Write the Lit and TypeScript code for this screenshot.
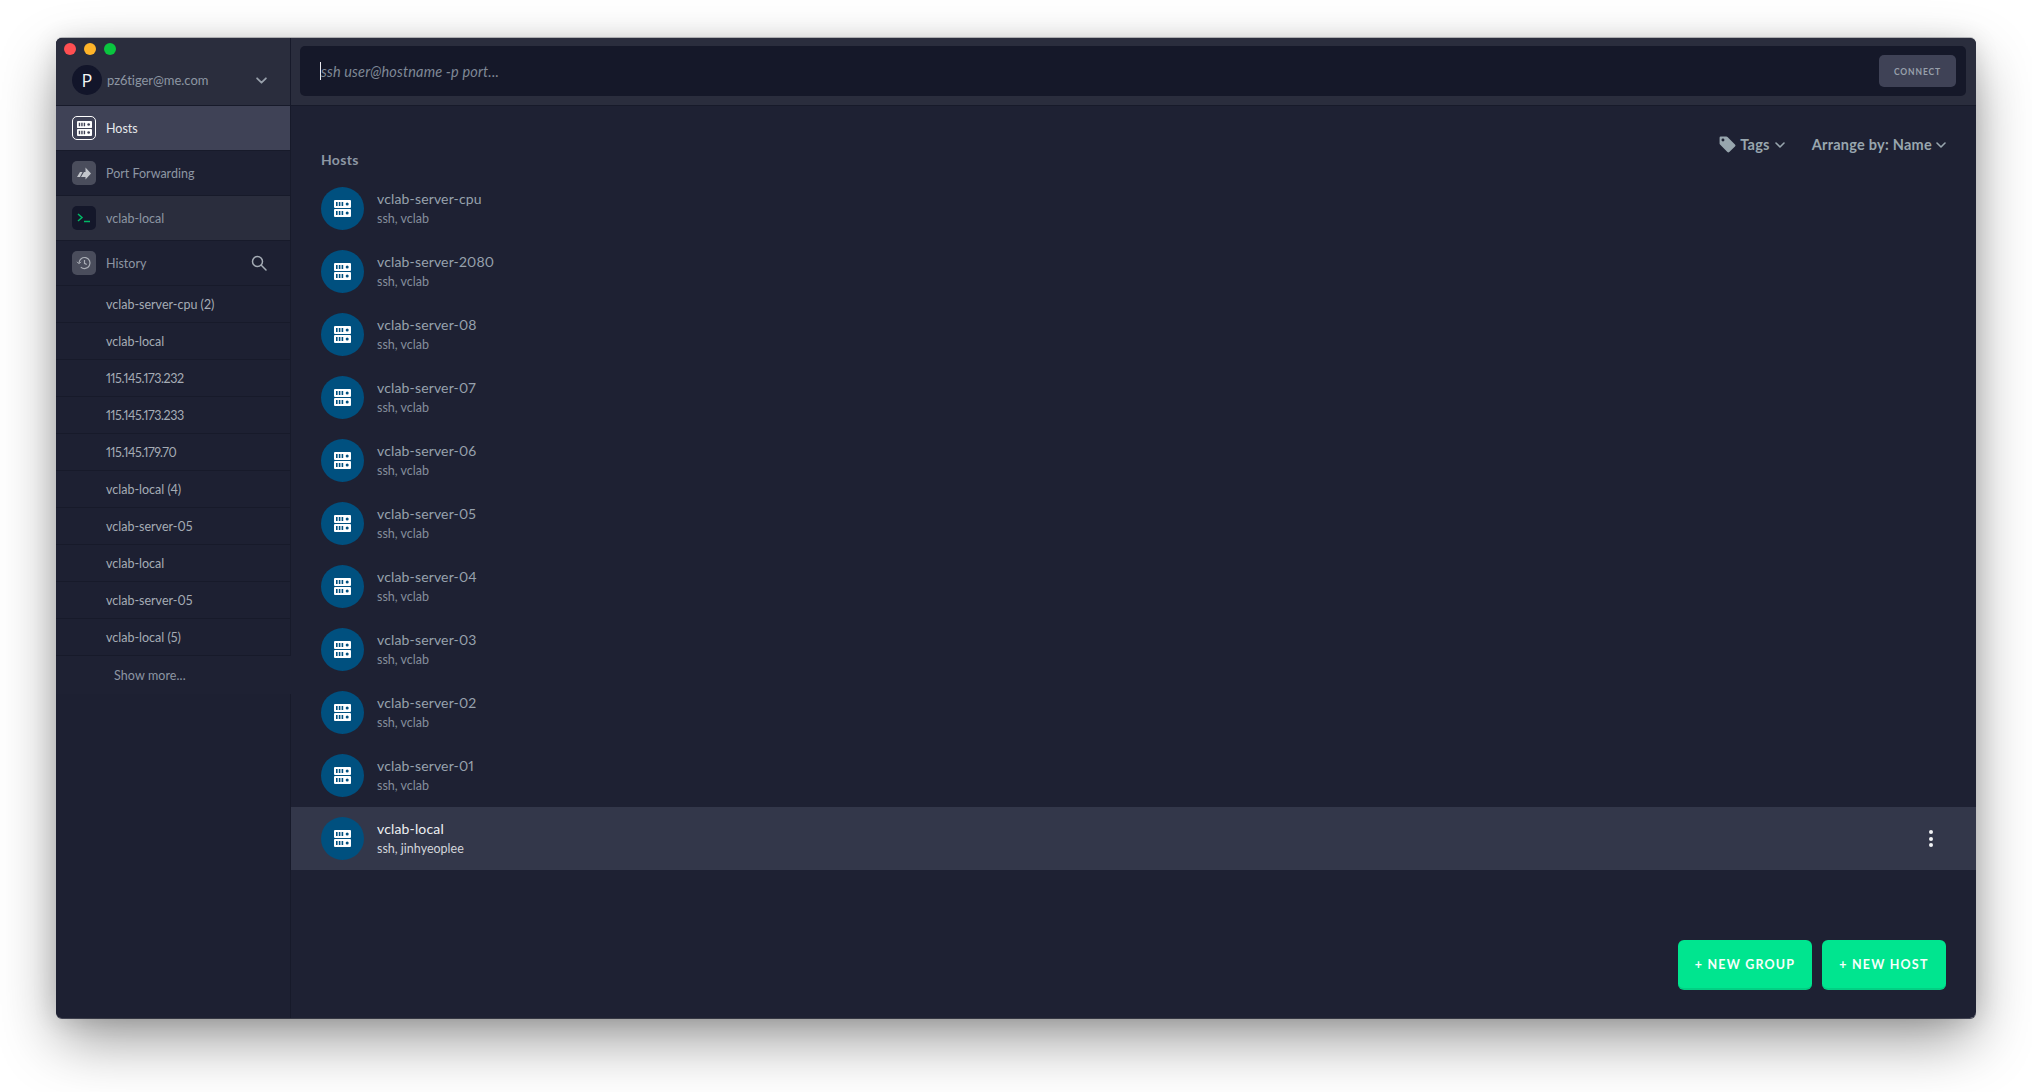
import { LitElement, html, css, svg } from "lit";
import { customElement } from "lit/decorators.js";

const serverIcon = (size: number, cls = "") => html`<svg class=${cls} width=${size} height=${size} viewBox="0 0 17 17">
  ${[0, 9].map(
    (y) => svg`<path fill="#fff" d="M1 ${y}h15a1 1 0 0 1 1 1v6a1 1 0 0 1-1 1H1a1 1 0 0 1-1-1v-6a1 1 0 0 1 1-1z"/>
    <path fill="var(--slot, #00507f)" d="M2 ${y + 2}h1.6v4H2zM4.8 ${y + 2}h1.6v4H4.8zM7.6 ${y + 2}h1.6v4H7.6z"/>
    <circle fill="var(--slot, #00507f)" cx="13.2" cy=${y + 4} r="1.5"/>`
  )}
</svg>`;

const chevron = (w: number, color: string, sw = 1.6) => html`<svg width=${w} height=${Math.round(w * 0.6)} viewBox="0 0 10 6" fill="none" stroke=${color} stroke-width=${sw} stroke-linecap="round" stroke-linejoin="round"><path d="M1 1l4 4 4-4"/></svg>`;

const hosts: [string, string][] = [
  ["vclab-server-cpu", "ssh, vclab"],
  ["vclab-server-2080", "ssh, vclab"],
  ["vclab-server-08", "ssh, vclab"],
  ["vclab-server-07", "ssh, vclab"],
  ["vclab-server-06", "ssh, vclab"],
  ["vclab-server-05", "ssh, vclab"],
  ["vclab-server-04", "ssh, vclab"],
  ["vclab-server-03", "ssh, vclab"],
  ["vclab-server-02", "ssh, vclab"],
  ["vclab-server-01", "ssh, vclab"],
  ["vclab-local", "ssh, jinhyeoplee"],
];

const history = [
  "vclab-server-cpu (2)",
  "vclab-local",
  "115.145.173.232",
  "115.145.173.233",
  "115.145.179.70",
  "vclab-local (4)",
  "vclab-server-05",
  "vclab-local",
  "vclab-server-05",
  "vclab-local (5)",
];

@customElement("app-root")
export class AppRoot extends LitElement {
  static styles = css`
    :host {
      display: block;
      width: 2032px;
      height: 1092px;
      box-sizing: border-box;
      padding: 38px 56px 74px;
      background: #fff;
      font-family: Lato, "Noto Sans", sans-serif;
      font-feature-settings: "pnum" 1;
      overflow: hidden;
    }
    .window {
      width: 1920px;
      height: 980px;
      display: flex;
      border-radius: 6px;
      overflow: hidden;
      background: #1e2133;
    }
    .shadow {
      border-radius: 6px;
      box-shadow: 0 24px 60px -4px rgba(0, 0, 0, 0.42), 0 2px 24px rgba(0, 0, 0, 0.12), 0 -1px 0 #c4c5c8, 0 1px 0 #55586a;
      width: 1920px;
      height: 980px;
    }
    .sidebar {
      width: 234px;
      flex: none;
      background: #1d2032;
      display: flex;
      flex-direction: column;
      border-right: 1px solid #171a2a;
    }
    .account {
      height: 67px;
      flex: none;
      background: #2a2d3d;
      border-bottom: 1px solid #171a2a;
      box-sizing: content-box;
      padding: 0 16px;
      display: flex;
      flex-direction: column;
    }
    .lights {
      display: flex;
      gap: 8px;
      margin: 5px 0 0 -8px;
    }
    .light {
      width: 12px;
      height: 12px;
      border-radius: 50%;
    }
    .red { background: #ff4f52; }
    .yellow { background: #ffb429; }
    .green { background: #0ac53f; }
    .user {
      display: flex;
      align-items: center;
      margin-top: 10px;
    }
    .avatar {
      width: 30px;
      height: 30px;
      border-radius: 50%;
      background: #12152a;
      color: #f4f5f6;
      font-size: 18px;
      display: flex;
      align-items: center;
      justify-content: center;
      margin-right: 5px;
      font-family: "Open Sans", sans-serif;
    }
    .email {
      flex: 1;
      font-size: 13px;
      color: #8d96a3;
      letter-spacing: -0.05px;
    }
    .user svg { margin-right: 7px; }
    .nav {
      height: 44px;
      flex: none;
      box-sizing: content-box;
      border-bottom: 1px solid #171a2a;
      display: flex;
      align-items: center;
      padding: 0 16px;
      font-size: 12.5px;
      color: #8d96a3;
    }
    .nav.active {
      background: #3f4256;
      color: #e6e8ea;
    }
    .nav.session { background: #2a2d3d; }
    .tile {
      width: 24px;
      height: 24px;
      border-radius: 5px;
      box-sizing: border-box;
      margin-right: 10px;
      display: flex;
      align-items: center;
      justify-content: center;
      background: #4a4d5c;
      flex: none;
    }
    .tile.outline {
      background: transparent;
      border: 1px solid #fff;
      --slot: #3f4256;
    }
    .tile.term { background: #14172a; }
    .nav .grow { flex: 1; }
    .nav .search { margin-right: 7px; }
    .hist {
      height: 36px;
      flex: none;
      box-sizing: content-box;
      border-bottom: 1px solid #171a2a;
      display: flex;
      align-items: center;
      padding-left: 50px;
      font-size: 12.5px;
      color: #a5acb5;
    }
    .hist.num { letter-spacing: -0.4px; }
    .more {
      height: 38px;
      flex: none;
      display: flex;
      align-items: center;
      padding-left: 58px;
      font-size: 12.5px;
      color: #8d96a3;
      letter-spacing: 0.1px;
      background: #1e2133;
      margin-right: -1px;
      position: relative;
    }
    .main {
      flex: 1;
      min-width: 0;
      display: flex;
      flex-direction: column;
    }
    .top {
      height: 67px;
      flex: none;
      box-sizing: content-box;
      background: #2a2d3d;
      border-bottom: 1px solid #171a2a;
      padding: 0 10px 0 9px;
      display: flex;
      align-items: flex-start;
    }
    .input {
      flex: 1;
      height: 50px;
      margin-top: 8px;
      box-sizing: border-box;
      background: #151829;
      border-radius: 5px;
      display: flex;
      align-items: center;
      padding: 0 10px 0 20px;
    }
    .caret {
      width: 1px;
      height: 18px;
      background: #e8e8ee;
      flex: none;
    }
    .placeholder {
      flex: 1;
      font-style: italic;
      font-size: 14.5px;
      color: #7f8896;
      letter-spacing: 0.15px;
      padding-top: 1px;
    }
    .connect {
      width: 77px;
      height: 32px;
      box-sizing: border-box;
      padding-top: 1px;
      background: #3f4256;
      border-radius: 5px;
      color: #98a0ab;
      font-size: 8.5px;
      font-weight: 700;
      letter-spacing: 0.9px;
      display: flex;
      align-items: center;
      justify-content: center;
    }
    .head {
      height: 71px;
      flex: none;
      display: flex;
      justify-content: space-between;
      padding: 0 30px 0 30px;
    }
    .title {
      align-self: flex-end;
      font-size: 14px;
      font-weight: 700;
      color: #8d97a4;
      line-height: 20px;
      padding-bottom: 7px;
      letter-spacing: 0.3px;
    }
    .tools {
      display: flex;
      align-items: center;
      height: 20px;
      margin-top: 28px;
      font-size: 14.5px;
      font-weight: 700;
      color: #98a6ae;
      letter-spacing: 0.25px;
    }
    .tools .tag { margin-right: 4px; }
    .tools .gap { margin: 0 27px 3px 5px; }
    .tools .end { margin: 0 0 3px 4px; }
    .row {
      height: 63px;
      flex: none;
      display: flex;
      align-items: center;
      padding: 0 30px;
    }
    .row.selected { background: #33374a; }
    .circle {
      width: 43px;
      height: 43px;
      border-radius: 50%;
      background: #00507f;
      display: flex;
      align-items: center;
      justify-content: center;
      margin-right: 13px;
      flex: none;
    }
    .info { flex: 1; }
    .name {
      font-size: 14px;
      color: #97a1ad;
      line-height: 18px;
      letter-spacing: 0.15px;
    }
    .sub {
      font-size: 12.5px;
      color: #858e9c;
      line-height: 16px;
      margin-top: 3px;
    }
    .selected .name { color: #eef0f2; }
    .selected .sub { color: #d2d5da; }
    .dots {
      display: flex;
      flex-direction: column;
      gap: 2.5px;
      margin-right: 13px;
    }
    .dots i {
      width: 4px;
      height: 4px;
      border-radius: 50%;
      background: #f2f3f5;
    }
    .actions {
      margin-top: auto;
      display: flex;
      justify-content: flex-end;
      gap: 10px;
      padding: 0 30px 28px 0;
    }
    .btn {
      height: 50px;
      box-sizing: border-box;
      border-radius: 6px;
      background: #00e58f;
      border-bottom: 2px solid #02cf83;
      color: #f6fffb;
      font-size: 12.5px;
      font-weight: 700;
      letter-spacing: 1.2px;
      display: flex;
      align-items: center;
      justify-content: center;
    }
    .btn.group { width: 134px; }
    .btn.host { width: 124px; }
  `;

  render() {
    return html`
      <div class="shadow">
        <div class="window">
          <aside class="sidebar">
            <div class="account">
              <div class="lights">
                <span class="light red"></span><span class="light yellow"></span><span class="light green"></span>
              </div>
              <div class="user">
                <div class="avatar">P</div>
                <div class="email">pz6tiger@me.com</div>
                ${chevron(11, "#98a0ab")}
              </div>
            </div>
            <div class="nav active">
              <div class="tile outline">${serverIcon(15)}</div>
              Hosts
            </div>
            <div class="nav">
              <div class="tile">
                <svg width="14" height="13" viewBox="0 0 14 13" fill="#c3c6cc">
                  <path d="M0 10l3-5h2.500L3 10z"/>
                  <path d="M4 10l3-5h1.500V.5L14 6.500 8.500 12.500V10z"/>
                </svg>
              </div>
              Port Forwarding
            </div>
            <div class="nav session">
              <div class="tile term">
                <svg width="14" height="10" viewBox="0 0 14 10" fill="none" stroke="#00b866" stroke-width="1.5">
                  <path d="M1 1l4 3.500L1 8"/><path d="M7 8.500h6"/>
                </svg>
              </div>
              vclab-local
            </div>
            <div class="nav">
              <div class="tile">
                <svg width="16" height="16" viewBox="0 0 16 16" fill="none" stroke="#a9adb5" stroke-width="1.2">
                  <path d="M3 8a5.500 5.500 0 1 1 1.800 4.100"/>
                  <path d="M1 6.800l2 2 2-2" stroke-width="1"/>
                  <path d="M8.500 5v3.300l2.200 1.300"/>
                </svg>
              </div>
              <span class="grow">History</span>
              <svg class="search" width="16" height="16" viewBox="0 0 16 16" fill="none" stroke="#a5acb5" stroke-width="1.500" stroke-linecap="round">
                <circle cx="6.500" cy="6.500" r="5"/><path d="M10.300 10.300l4.700 4.700"/>
              </svg>
            </div>
            ${history.map((h) => html`<div class="hist ${/^\d/.test(h) ? "num" : ""}">${h}</div>`)}
            <div class="more">Show more...</div>
          </aside>
          <main class="main">
            <div class="top">
              <div class="input">
                <span class="caret"></span>
                <span class="placeholder">ssh user@hostname -p port...</span>
                <span class="connect">CONNECT</span>
              </div>
            </div>
            <div class="head">
              <div class="title">Hosts</div>
              <div class="tools">
                <svg class="tag" width="17" height="17" viewBox="0 0 15 15" fill="#98a6ae">
                  <path d="M0.500 1.500a1 1 0 0 1 1-1h5a1.500 1.500 0 0 1 1 .4l6.600 6.600a1.200 1.200 0 0 1 0 1.700l-5 5a1.200 1.200 0 0 1-1.700 0L.900 7.600a1.500 1.500 0 0 1-.4-1zM3.500 2.200a1.300 1.300 0 1 0 0 2.600 1.300 1.300 0 0 0 0-2.600z" fill-rule="evenodd"/>
                </svg>
                Tags
                <span class="gap">${chevron(10, "#98a6ae")}</span>
                Arrange by: Name
                <span class="end">${chevron(10, "#98a6ae")}</span>
              </div>
            </div>
            ${hosts.map(
              ([n, s], i) => html`<div class="row ${i === hosts.length - 1 ? "selected" : ""}">
                <div class="circle">${serverIcon(17)}</div>
                <div class="info">
                  <div class="name">${n}</div>
                  <div class="sub">${s}</div>
                </div>
                ${i === hosts.length - 1 ? html`<div class="dots"><i></i><i></i><i></i></div>` : ""}
              </div>`
            )}
            <div class="actions">
              <div class="btn group">+ NEW GROUP</div>
              <div class="btn host">+ NEW HOST</div>
            </div>
          </main>
        </div>
      </div>
    `;
  }
}
